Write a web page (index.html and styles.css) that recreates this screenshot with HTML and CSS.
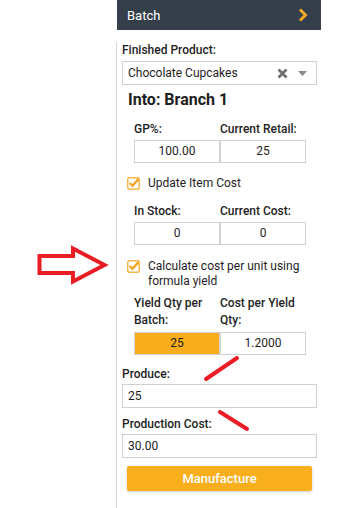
FILE: index.html
```html
<!DOCTYPE html>
<html lang="en">
<head>
    <meta charset="UTF-8">
    <meta name="viewport" content="width=device-width, initial-scale=1.0">
    <title>Batch</title>
    <link rel="stylesheet" href="styles.css">
</head>
<body>
    <div class="page">
        <div class="gutter"></div>

        <div class="panel">
            <div class="panel-header">
                <span>Batch</span>
                <svg class="chevron" width="10" height="14" viewBox="0 0 10 14">
                    <polyline points="2,1.5 7.5,7 2,12.5" fill="none" stroke="#f0a824" stroke-width="3"/>
                </svg>
            </div>

            <div class="panel-body">
                <div class="label">Finished Product:</div>
                <div class="select">
                    <span class="select-value">Chocolate Cupcakes</span>
                    <svg class="select-clear" width="11" height="11" viewBox="0 0 11 11">
                        <path d="M1.5 1.5 L9.5 9.5 M9.5 1.5 L1.5 9.5" stroke="#707070" stroke-width="2.8"/>
                    </svg>
                    <svg class="select-arrow" width="9" height="5" viewBox="0 0 9 5">
                        <polygon points="0,0 9,0 4.5,5" fill="#888"/>
                    </svg>
                </div>

                <h2 class="branch">Into: Branch 1</h2>

                <div class="pair">
                    <div class="pair-labels">
                        <div class="label">GP%:</div>
                        <div class="label">Current Retail:</div>
                    </div>
                    <div class="pair-fields">
                        <div class="cell">100.00</div>
                        <div class="cell">25</div>
                    </div>
                </div>

                <div class="check-row check-first">
                    <svg class="checkbox" width="14" height="14" viewBox="0 0 14 14">
                        <rect x="0.75" y="1.75" width="11.5" height="11.5" rx="1.5" fill="#fff" stroke="#f7b54a" stroke-width="1.5"/>
                        <polyline points="2.8,7 5.5,9.8 11.5,3" fill="none" stroke="#f4a21c" stroke-width="2.4"/>
                    </svg>
                    <span>Update Item Cost</span>
                </div>

                <div class="pair pair-stock">
                    <div class="pair-labels">
                        <div class="label">In Stock:</div>
                        <div class="label">Current Cost:</div>
                    </div>
                    <div class="pair-fields">
                        <div class="cell">0</div>
                        <div class="cell">0</div>
                    </div>
                </div>

                <div class="check-row check-second">
                    <svg class="checkbox" width="14" height="14" viewBox="0 0 14 14">
                        <rect x="0.75" y="1.75" width="11.5" height="11.5" rx="1.5" fill="#fff" stroke="#f7b54a" stroke-width="1.5"/>
                        <polyline points="2.8,7 5.5,9.8 11.5,3" fill="none" stroke="#f4a21c" stroke-width="2.4"/>
                    </svg>
                    <span>Calculate cost per unit using formula yield</span>
                </div>

                <div class="pair pair-yield">
                    <div class="pair-labels">
                        <div class="label">Yield Qty per Batch:</div>
                        <div class="label">Cost per Yield Qty:</div>
                    </div>
                    <div class="pair-fields">
                        <div class="cell cell-highlight">25</div>
                        <div class="cell">1.2000</div>
                    </div>
                </div>

                <div class="label label-produce">Produce:</div>
                <div class="field">25</div>

                <div class="label label-cost">Production Cost:</div>
                <div class="field">30.00</div>

                <button class="btn-manufacture">Manufacture</button>
            </div>
        </div>

        <!-- red annotations drawn over the screenshot -->
        <svg class="annotations" width="338" height="508" viewBox="0 0 338 508">
            <polygon points="39.5,256 73,256 73,248.5 104.5,265 73,281.5 73,273 39.5,273"
                     fill="none" stroke="#ea1c24" stroke-width="4"/>
            <line x1="206" y1="379" x2="237" y2="358" stroke="#ea1c24" stroke-width="4" stroke-linecap="round"/>
            <line x1="220" y1="412" x2="247" y2="429" stroke="#ea1c24" stroke-width="4" stroke-linecap="round"/>
        </svg>
    </div>
</body>
</html>
```

FILE: styles.css
```css
* {
    margin: 0;
    padding: 0;
    box-sizing: border-box;
}

body {
    font-family: Roboto, 'Liberation Sans', Arial, sans-serif;
    font-size: 12px;
    color: #1e1e1e;
    background-color: #fff;
}

.page {
    position: relative;
    display: flex;
    width: 338px;
    height: 508px;
    overflow: hidden;
}

.gutter {
    width: 116px;
    flex-shrink: 0;
}

.panel {
    width: 205px;
    display: flex;
    flex-direction: column;
}

.panel-header {
    margin-left: 1px;
    height: 30px;
    background: #343f4b;
    color: #fff;
    font-size: 13px;
    display: flex;
    align-items: center;
    justify-content: space-between;
    padding: 0 13px 0 10px;
}

.panel-body {
    flex: 1;
    margin-top: 12px;
    border-left: 1px solid #d4d4d4;
    padding: 0 4px 0 5px;
    display: flex;
    flex-direction: column;
}

.label {
    font-weight: 500;
    line-height: 16px;
}

.select {
    margin-top: 3px;
    height: 24px;
    border: 1px solid #cfcfcf;
    display: flex;
    align-items: center;
    padding: 0 9px 0 5px;
}

.select-value {
    flex: 1;
}

.select-clear {
    margin-right: 10px;
}

.branch {
    margin: 5px 0 0 6px;
    font-size: 16px;
    font-weight: 700;
    line-height: 20px;
}

.pair {
    margin: 11px 0 0 12px;
    width: 172px;
}

.pair-labels,
.pair-fields {
    display: grid;
    grid-template-columns: 86px 86px;
}

.pair-fields {
    margin-top: 3px;
}

.cell {
    height: 23px;
    border: 1px solid #d2d2d2;
    text-align: center;
    line-height: 21px;
}

.cell-highlight {
    background: #f9ad1b;
}

.check-row {
    display: flex;
    align-items: flex-start;
    margin-left: 5px;
    line-height: 15px;
}

.check-row span {
    padding-left: 7px;
    width: 175px;
}

.checkbox {
    flex-shrink: 0;
}

.check-first {
    margin-top: 13px;
}

.pair-stock {
    margin-top: 12px;
}

.check-second {
    margin-top: 14px;
}

.pair-yield {
    margin-top: 6px;
}

.pair-yield .label {
    line-height: 17px;
    padding-right: 6px;
}

.label-produce {
    margin-top: 11px;
}

.label-cost {
    margin-top: 8px;
}

.field {
    margin-top: 2px;
    height: 24px;
    border: 1px solid #d0d0d0;
    padding-left: 5px;
    line-height: 22px;
}

.btn-manufacture {
    margin: 8px 0 0 5px;
    width: 185px;
    height: 25px;
    border: none;
    border-radius: 2px;
    background: #f9ae1c;
    color: #fff;
    font-family: inherit;
    font-size: 13px;
    font-weight: 500;
    box-shadow: 0 1px 3px rgba(0, 0, 0, 0.2);
}

.annotations {
    position: absolute;
    left: 0;
    top: 0;
    pointer-events: none;
}
```
